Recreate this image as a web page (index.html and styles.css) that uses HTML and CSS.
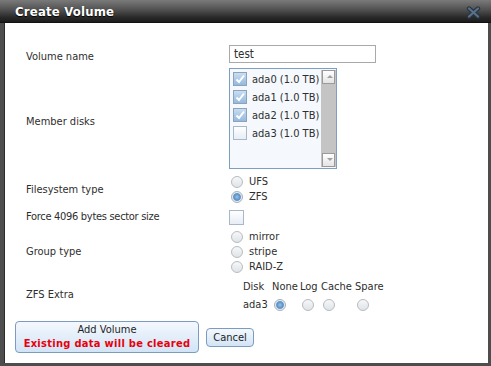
FILE: index.html
```html
<!DOCTYPE html>
<html lang="en">
<head>
    <meta charset="UTF-8">
    <title>Create Volume</title>
    <link rel="stylesheet" href="styles.css">
</head>
<body>
    <div class="dialog">
        <div class="titlebar">
            <span class="title">Create Volume</span>
            <svg class="close" width="15" height="13" viewBox="0 0 15 13">
                <path d="M3 2.5 L12 10.5 M12 2.5 L3 10.5" stroke="#2a3440" stroke-width="4.4" stroke-linecap="round"/>
                <path d="M3 2.5 L12 10.5 M12 2.5 L3 10.5" stroke="#58708a" stroke-width="2.2" stroke-linecap="round"/>
            </svg>
        </div>

        <div class="content">
            <div class="form">
                <div class="label">Volume name</div>
                <div class="field">
                    <div class="textbox">test</div>
                </div>

                <div class="label">Member disks</div>
                <div class="field">
                    <div class="listbox">
                        <div class="list-items">
                            <div class="list-item"><span class="check on"></span>ada0 (1.0 TB)</div>
                            <div class="list-item"><span class="check on"></span>ada1 (1.0 TB)</div>
                            <div class="list-item"><span class="check on"></span>ada2 (1.0 TB)</div>
                            <div class="list-item"><span class="check"></span>ada3 (1.0 TB)</div>
                        </div>
                        <div class="scrollbar">
                            <div class="scroll-btn up"></div>
                            <div class="scroll-track"></div>
                            <div class="scroll-btn down"></div>
                        </div>
                    </div>
                </div>

                <div class="label">Filesystem type</div>
                <div class="field options">
                    <div class="option"><span class="radio"></span>UFS</div>
                    <div class="option"><span class="radio on"></span>ZFS</div>
                </div>

                <div class="label tight">Force 4096 bytes sector size</div>
                <div class="field force">
                    <span class="check big"></span>
                </div>

                <div class="label">Group type</div>
                <div class="field options group">
                    <div class="option"><span class="radio"></span>mirror</div>
                    <div class="option"><span class="radio"></span>stripe</div>
                    <div class="option"><span class="radio"></span>RAID-Z</div>
                </div>

                <div class="label">ZFS Extra</div>
                <div class="field">
                    <table class="extra">
                        <tr class="head">
                            <td class="c-disk">Disk</td>
                            <td class="c-none">None</td>
                            <td class="c-log">Log</td>
                            <td class="c-cache">Cache</td>
                            <td>Spare</td>
                        </tr>
                        <tr>
                            <td>ada3</td>
                            <td><span class="radio on"></span></td>
                            <td><span class="radio"></span></td>
                            <td><span class="radio"></span></td>
                            <td><span class="radio"></span></td>
                        </tr>
                    </table>
                </div>
            </div>

            <div class="buttons">
                <div class="btn add">
                    Add Volume
                    <span class="warn">Existing data will be cleared</span>
                </div>
                <div class="btn cancel">Cancel</div>
            </div>
        </div>
    </div>
</body>
</html>
```

FILE: styles.css
```css
body {
    margin: 0;
    background-color: #4d4d4d;
    font-family: 'DejaVu Sans Condensed', 'DejaVu Sans', sans-serif;
    font-stretch: condensed;
    font-size: 11px;
    color: #2e2e2e;
    overflow: hidden;
}
.dialog {
    height: 366px;
    display: flex;
    flex-direction: column;
}
.titlebar {
    height: 22px;
    display: flex;
    align-items: center;
    justify-content: space-between;
    padding: 0 10px 0 15px;
    background: linear-gradient(#7a7a7a, #505050 45%, #282828 80%, #1c1c1c);
    border-bottom: 1px solid #111;
}
.title {
    color: #ffffff;
    font-weight: bold;
    font-size: 13px;
    letter-spacing: 0.2px;
    text-shadow: 0 1px 1px #000;
}
.close {
    margin-top: 3px;
}
.content {
    flex: 1;
    background-color: #ffffff;
    margin: 0 3px 3px 4px;
    padding: 22px 0 0 21px;
    border-left: 1px solid #2b2b2b;
}
.form {
    display: grid;
    grid-template-columns: 203px auto;
}
.label {
    align-self: center;
}
.label.tight {
    letter-spacing: -0.3px;
}
.field {
    display: flex;
    flex-direction: column;
    align-items: flex-start;
}
.textbox {
    box-sizing: border-box;
    width: 147px;
    height: 18px;
    border: 1px solid #a9a9a9;
    padding: 0 4px;
    line-height: 16px;
    font-size: 11.5px;
    margin-bottom: 5px;
}
.listbox {
    box-sizing: border-box;
    width: 108px;
    height: 101px;
    border: 1px solid #7f9fc1;
    background-color: #f5f9fd;
    display: flex;
    justify-content: space-between;
    margin-bottom: 5px;
}
.list-items {
    padding: 1px 0 0 3px;
}
.list-item {
    height: 18px;
    display: flex;
    align-items: center;
    white-space: nowrap;
}
.check {
    box-sizing: border-box;
    width: 14px;
    height: 14px;
    border: 1px solid #a9b8c8;
    background: linear-gradient(#ffffff, #e6edf4);
    margin-right: 5px;
    flex-shrink: 0;
}
.check.on {
    border-color: #8ea3b9;
    background: url("data:image/svg+xml,%3Csvg xmlns='http://www.w3.org/2000/svg' width='12' height='12'%3E%3Cpath d='M2.5 6.5 L5 9 L10 2.5' fill='none' stroke='%23ffffff' stroke-width='2'/%3E%3C/svg%3E") center no-repeat, linear-gradient(#c9ddf2, #94b9df);
}
.scrollbar {
    width: 15px;
    display: flex;
    flex-direction: column;
    background-color: #c4c4c4;
    margin: 1px 0;
}
.scroll-track {
    flex: 1;
}
.scroll-btn {
    height: 12px;
    margin: 0 1px;
    border: 1px solid #9a9a9a;
    background: linear-gradient(#ffffff, #e4e4e4);
    position: relative;
}
.scroll-btn::after {
    content: '';
    position: absolute;
    left: 4px;
    top: 4px;
    border-left: 3px solid transparent;
    border-right: 3px solid transparent;
}
.scroll-btn.up::after {
    border-bottom: 3px solid #a0a0a0;
}
.scroll-btn.down::after {
    border-top: 3px solid #a0a0a0;
}
.option {
    height: 15px;
    display: flex;
    align-items: center;
}
.radio {
    display: inline-block;
    box-sizing: border-box;
    width: 12px;
    height: 12px;
    border-radius: 50%;
    border: 1px solid #b8bcc0;
    background: linear-gradient(#f6f7f8, #dfe4e8);
    margin: 0 6px 0 2px;
    flex-shrink: 0;
}
.radio.on {
    border-color: #a8b2bc;
    background: radial-gradient(circle, #9cc2e6 0, #5d92c7 3px, #6f9fcf 3.6px, #e3eaf0 4.4px);
}
.force {
    padding: 6px 0 4px;
}
.check.big {
    width: 15px;
    height: 15px;
    margin: 0;
}
.extra {
    border-collapse: collapse;
    margin: 5px 0 0 14px;
}
.extra td {
    padding: 0;
    height: 18px;
    white-space: nowrap;
    vertical-align: middle;
}
.extra .head td {
    height: 15px;
}
.extra .c-disk {
    width: 29px;
}
.extra .c-none {
    width: 28px;
}
.extra .c-log {
    width: 21px;
}
.extra .c-cache {
    width: 34px;
}
.extra .radio {
    margin: 5px 0 0 2px;
}
.buttons {
    display: flex;
    align-items: center;
    gap: 7px;
    margin: 7px 0 0 -11px;
}
.btn {
    box-sizing: border-box;
    border: 1px solid #7b9cbe;
    border-radius: 4px;
    background: linear-gradient(#f4f8fd, #d2e4f6);
    text-align: center;
    color: #1e1e1e;
}
.add {
    width: 184px;
    height: 32px;
    padding-top: 1px;
    line-height: 14px;
}
.warn {
    display: block;
    color: #e8000b;
    font-weight: bold;
    letter-spacing: 0.3px;
}
.cancel {
    width: 48px;
    height: 19px;
    line-height: 17px;
}
```
